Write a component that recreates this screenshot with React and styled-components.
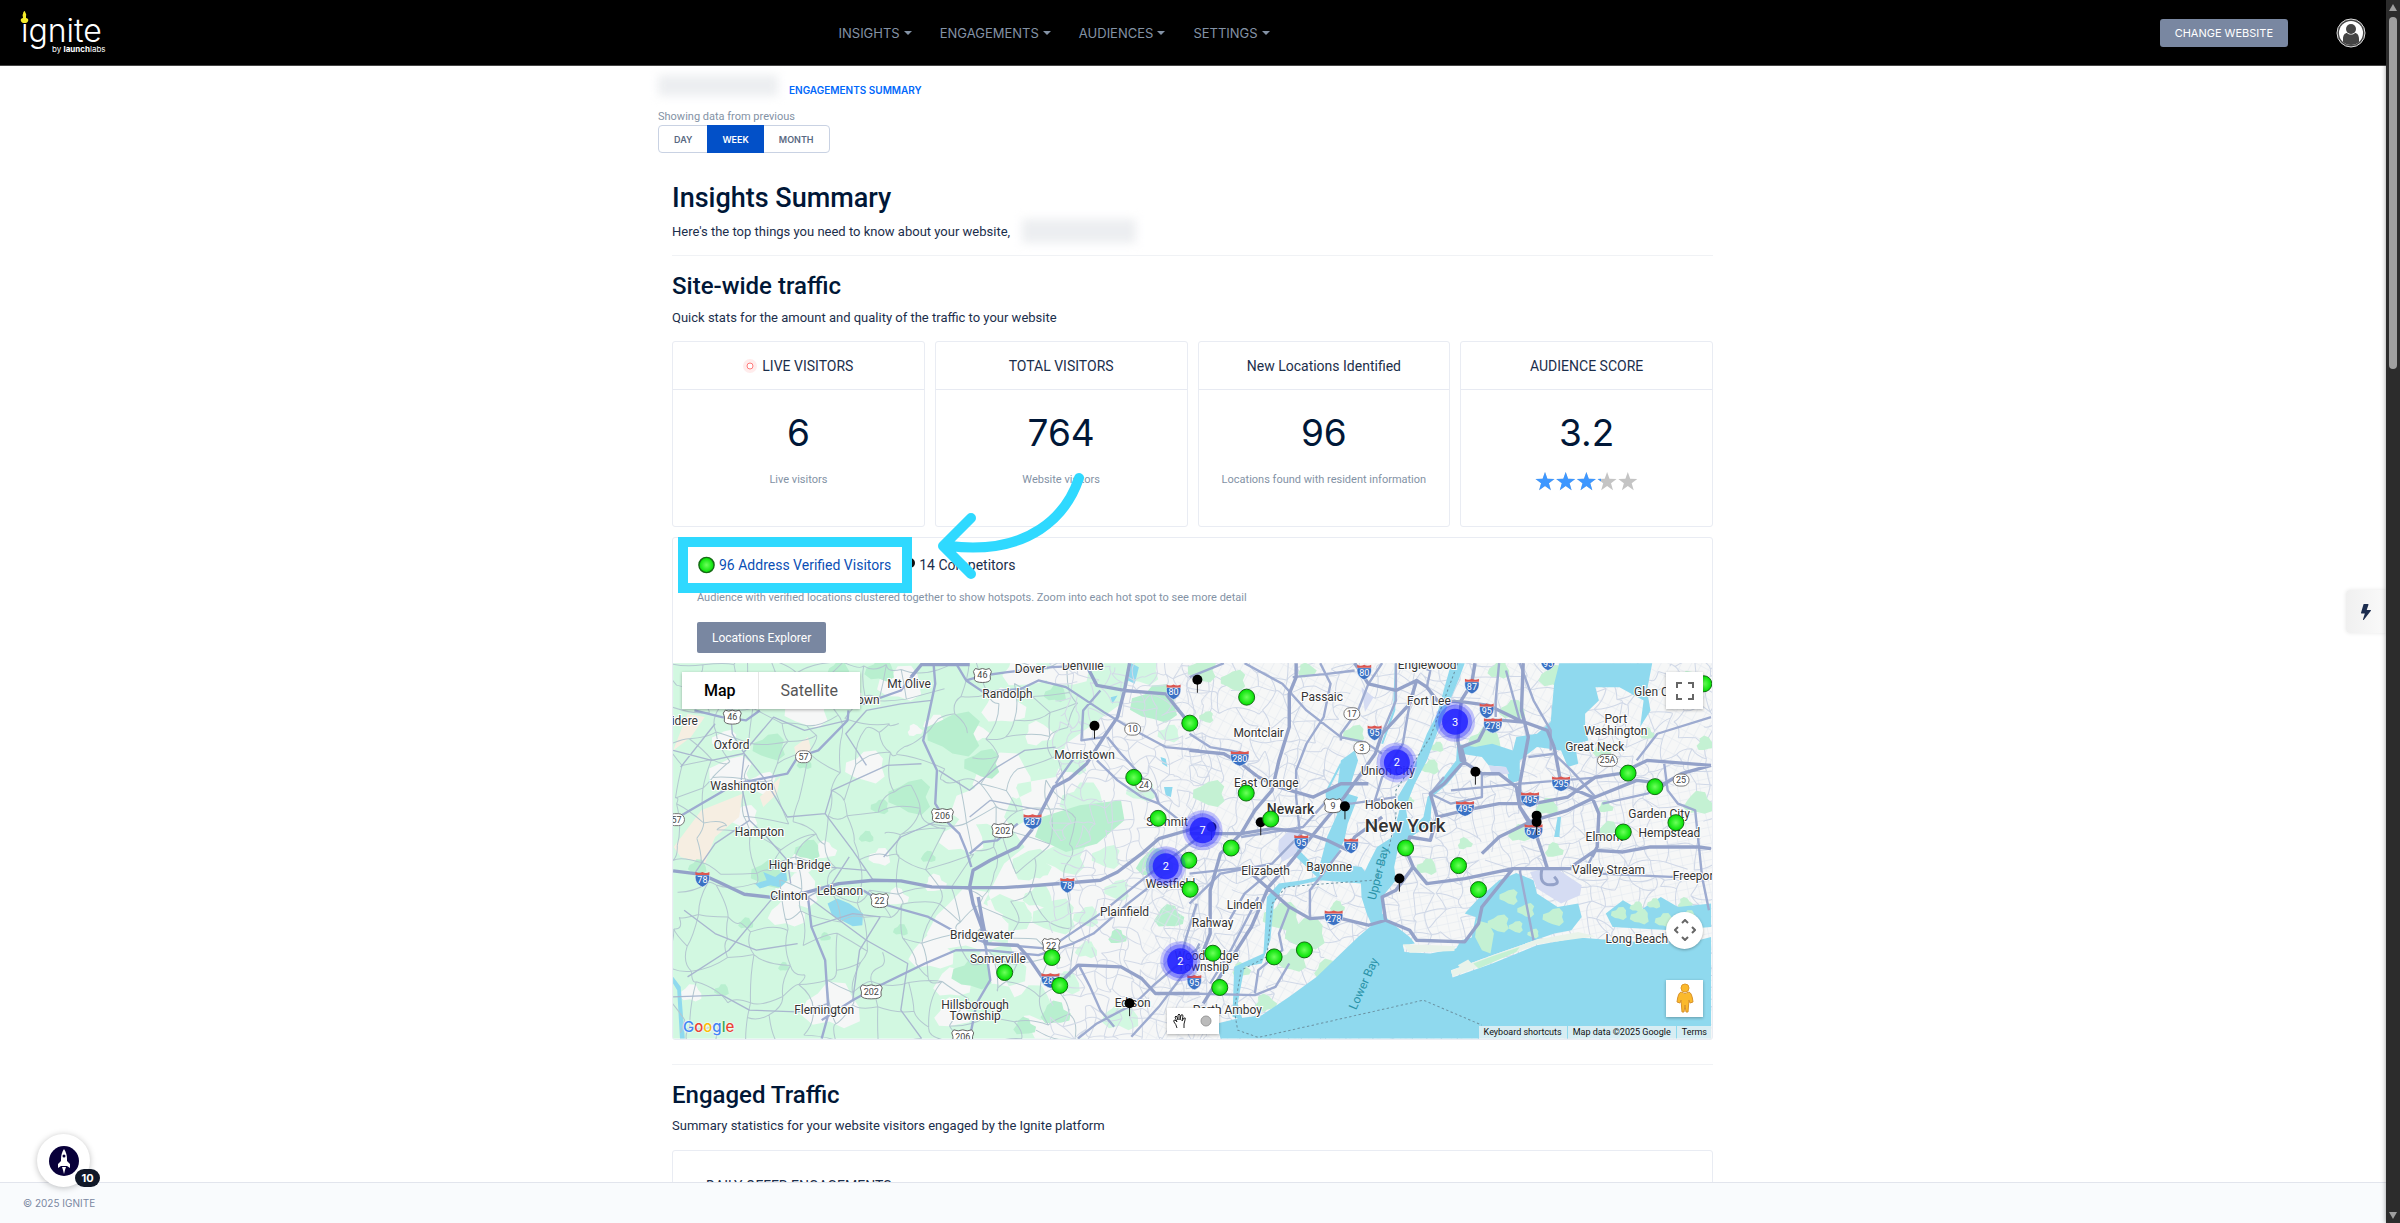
import styled, { createGlobalStyle, css } from "styled-components";
import { BsLightningFill } from "react-icons/bs";

const App = () => {
  return (
    <Page>
      <GlobalStyle />
      <Main>
        <Header>
          <a href="#home" aria-label="ignite by launchlabs">
            <Logo />
          </a>
          <Nav>
            {["INSIGHTS", "ENGAGEMENTS", "AUDIENCES", "SETTINGS"].map((name) => (
              <NavButton key={name}>
                {name}
                <Caret />
              </NavButton>
            ))}
          </Nav>
          <HeaderRight>
            <ChangeButton>CHANGE WEBSITE</ChangeButton>
            <AvatarButton aria-label="Account">
              <Avatar />
            </AvatarButton>
          </HeaderRight>
        </Header>

        <Content>
          <Container>
            <Crumbs>
              <Redacted $width={120} $height={21} />
              <CrumbLink href="#summary">ENGAGEMENTS SUMMARY</CrumbLink>
            </Crumbs>
            <PeriodLabel>Showing data from previous</PeriodLabel>
            <Segmented>
              <Segment>DAY</Segment>
              <Segment $active>WEEK</Segment>
              <Segment>MONTH</Segment>
            </Segmented>

            <Inner>
              <h1>Insights Summary</h1>
              <Lead>
                Here's the top things you need to know about your website,
                <Redacted $width={114} $height={24} />
              </Lead>
              <Divider />
              <h2>Site-wide traffic</h2>
              <Lead>Quick stats for the amount and quality of the traffic to your website</Lead>

              <Stats>
                {stats.map(({ title, value, note, live }) => (
                  <Card key={title}>
                    <CardHead>
                      {live && <LiveDot />}
                      {title}
                    </CardHead>
                    <CardBody>
                      <Value>{value}</Value>
                      {note ? <Note>{note}</Note> : <Stars score={3.2} />}
                    </CardBody>
                  </Card>
                ))}
              </Stats>

              <MapCard>
                <MapIntro>
                  <Legend>
                    <LegendLink href="#verified">
                      <GreenDot />
                      96 Address Verified Visitors
                    </LegendLink>
                    <LegendItem>
                      <PinIcon />
                      14 Competitors
                    </LegendItem>
                  </Legend>
                  <MapNote>
                    Audience with verified locations clustered together to show hotspots. Zoom into
                    each hot spot to see more detail
                  </MapNote>
                  <ExplorerButton>Locations Explorer</ExplorerButton>
                </MapIntro>
                <MapView />
                <Highlight />
                <Arrow />
              </MapCard>

              <Divider $far />
              <h2>Engaged Traffic</h2>
              <Lead>
                Summary statistics for your website visitors engaged by the Ignite platform
              </Lead>
              <EngagedCard>DAILY OFFER ENGAGEMENTS</EngagedCard>
            </Inner>
          </Container>
        </Content>

        <Footer>© 2025 IGNITE</Footer>
        <QuickTab aria-label="Quick actions">
          <BsLightningFill size={16} />
        </QuickTab>
        <Launcher aria-label="Launcher, 10 new">
          <Rocket />
          <Badge>10</Badge>
        </Launcher>
      </Main>
      <ScrollTrack>
        <ScrollArrow />
        <ScrollThumb />
        <ScrollArrow $down />
      </ScrollTrack>
    </Page>
  );
};

export default App;

const stats = [
  { title: "LIVE VISITORS", value: "6", note: "Live visitors", live: true },
  { title: "TOTAL VISITORS", value: "764", note: "Website visitors" },
  { title: "New Locations Identified", value: "96", note: "Locations found with resident information" },
  { title: "AUDIENCE SCORE", value: "3.2" },
];

/* ---------- icons ---------- */

const Logo = () => (
  <svg width="90" height="46" viewBox="0 0 90 46" role="img">
    <path d="M4 13c-3-1-3-5 0-5 0-2-1-3 0-4 0-2 1-3 2-3 0 2 2 3 1 5v2c3 0 3 4 0 5z" fill="#f4ea2a" />
    <g fill="#fff" fontFamily="Inter, sans-serif">
      <text x="2" y="32" fontSize="32" fontWeight="300">
        ıgnite
      </text>
      <text x="33" y="42" fontSize="8">
        by <tspan fontWeight="700">launch</tspan>labs
      </text>
    </g>
  </svg>
);

const Avatar = () => (
  <svg width="30" height="30" viewBox="0 0 30 30">
    <circle cx="15" cy="15" r="14" fill="#444" stroke="#ddd" strokeWidth="1" />
    <circle cx="15" cy="15" r="12" fill="#fff" />
    <circle cx="15" cy="11" r="5" fill="#444" />
    <path d="M7 24v-3c0-4 2-6 4-6 2 2 6 2 8 0 2 0 4 2 4 6v3c-4 4-12 4-16 0z" fill="#444" />
  </svg>
);

const LiveDot = () => (
  <svg width="14" height="14" viewBox="0 0 14 14">
    <circle cx="7" cy="7" r="7" fill="#ffecec" />
    <circle cx="7" cy="7" r="3" fill="#fff" stroke="#ff7a7a" />
  </svg>
);

const GreenDot = () => (
  <svg width="19" height="20" viewBox="-10 -10 20 20">
    <defs>
      <radialGradient id="green">
        <stop offset="0" stopColor="#6dff5c" />
        <stop offset="1" stopColor="#00e000" />
      </radialGradient>
    </defs>
    <circle r="8" fill="url(#green)" stroke="#156b15" strokeWidth="1.5" />
  </svg>
);

const PinIcon = () => (
  <svg width="10" height="20" viewBox="0 0 10 20">
    <path d="M4 8v10" stroke="#333" />
    <circle cx="4" cy="8" r="5" fill="#111" />
  </svg>
);

const STAR = "M10 0l2.4 6.7 7.1.2-5.6 4.4 2 6.9L10 14.1l-5.900 4.100 2-6.900L.5 6.900l7.100-.2z";

const Stars = ({ score }) => (
  <svg width="103" height="24" viewBox="0 -2 103 24" role="img" aria-label={`${score} of 5 stars`}>
    <defs>
      <clipPath id="score">
        <rect y="-2" width={(score / 5) * 103} height="24" />
      </clipPath>
    </defs>
    {["#c4c4c4", "#3d97ff"].map((fill, layer) => (
      <g key={fill} fill={fill} clipPath={layer ? "url(#score)" : undefined}>
        {[0, 1, 2, 3, 4].map((n) => (
          <path key={n} d={STAR} transform={`translate(${n * 20.7} 0)`} />
        ))}
      </g>
    ))}
  </svg>
);

const Rocket = () => (
  <svg width="30" height="30" viewBox="0 0 30 30">
    <circle cx="15" cy="15" r="15" fill="#08003a" />
    <path
      d="M15 3c-2 3-3 6-3 10v2l-3 3v4l3-2h6l3 2v-4l-3-3v-2c0-4-1-7-3-10z"
      fill="#fff"
    />
    <circle cx="15" cy="10" r="1.5" fill="#08003a" />
    <path d="M13 21h4l-1 3-1 4-1-4z" fill="#fff" />
  </svg>
);

/* ---------- map ---------- */

// The map is drawn as two tiles, each on its own grid.
const TILES = { w: -13, e: 517 };
const place = (tile, x, y) => [TILES[tile] + x / 2.904, y / 3 - 12.5];
const tileTransform = (tile) => `translate(${TILES[tile]} -12.5) scale(0.34435 0.33333)`;

const westRoads = [
  "M38 662L120 672L170 695L245 732L330 742L420 728L520 700L620 690L700 692L790 710L880 712L1000 712L1100 705L1280 690L1330 665L1400 610L1450 565L1568 530",
  "M1365 38L1350 120L1330 200L1290 260L1240 340L1190 385L1145 410L1110 480L1080 540L1040 590L960 630L910 660L900 710L910 760L935 830L945 880L1040 885L1070 920L1110 980L1160 1000L1215 945L1340 950L1400 985L1440 1030L1568 1030",
  "M925 740L935 800L950 880",
  "M730 80L760 42L900 42M1240 45L1270 105L1350 120L1470 130L1500 170L1540 220",
];
const westStreets = [
  "M795 38L800 100L765 270L805 360L800 460L830 510L870 550L890 600L905 650M945 880L960 990L920 1060L900 1165",
  "M860 38L890 90L940 75L1010 65L1140 50L1240 45M100 180L180 200L250 210L290 180M590 160L700 120L730 80",
  "M38 510L120 460L220 400L370 370L400 320L460 300L545 210L548 180",
  "M890 90L940 125L1050 115L1100 90L1180 110L1290 185L1370 235L1470 290L1568 300",
  "M1300 260L1340 310L1380 355L1440 430L1450 460L1510 510M1270 330L1330 390L1400 440L1450 460M1205 320L1150 400",
  "M590 720L660 765L780 800L850 840L940 875M945 880L1130 895L1180 860L1280 790L1400 690L1450 650L1568 560",
  "M470 1110L560 1050L640 1005L770 940L860 900L950 900L1100 915L1200 880L1260 850L1360 760L1460 680",
  "M900 610L940 575L980 570L1040 520",
  "M430 740L440 830L480 930L490 1090L470 1165",
  "M1370 1160L1450 1070L1530 960L1568 880M1215 1165L1270 1120L1380 1060L1440 1000L1568 890M1220 950L1250 1010L1280 1080L1320 1130",
  "M1280 120L1230 180L1225 270L1290 260M1560 760L1530 860L1520 900",
];
const westLanes = [
  "M205 180L210 250L245 310L235 400L260 510L310 560L370 630L380 700",
  "M38 300L150 330L240 310L330 200L420 240L545 210",
  "M245 310L300 380L370 500L480 490L500 420L660 345L760 340",
  "M480 490L560 600L620 690M380 640L480 650L600 660",
  "M600 345L540 250L600 180L700 160L790 150",
  "M810 360L900 420L980 350L1060 300L1150 290",
  "M38 1040L180 1035L260 1080L400 1085L490 1060M330 740L200 900L80 980",
  "M430 740L600 870L720 940L700 1080L760 1165M440 830L560 790L640 800",
  "M900 500L960 450L1110 480M830 500L700 560L650 620",
  "M640 800L580 900L560 1050M260 510L160 580L100 670M160 220L60 350",
  "M550 620L500 700L430 740M70 780L160 850L280 900L400 880",
];

const eastRoads = [
  "M310 38L310 80L290 130L290 230L260 330L240 420L190 480L150 550L90 610L60 720L60 850L30 930",
  "M660 90L640 160L560 250L540 310L450 440L370 540L290 640L230 710L180 830L100 960L40 1060",
  "M480 38L520 100L600 120L660 90L690 110L720 150L800 155L870 165L960 210L1040 240L1060 290",
  "M180 670L290 770L350 805L420 800L520 825L570 810L640 840L660 870L800 875L840 820L850 770L940 655L1110 655",
  "M570 810L560 740L600 720L650 650L630 600L640 560L700 570L720 500L700 430L740 400L800 330L790 290L840 270L870 210L910 210L970 215",
  "M830 38L820 100L790 150L780 270L790 330L850 370L900 370L950 410L960 470L1000 530L1030 620L1040 655",
  "M720 500L800 480L900 460L1000 460L1100 440L1180 380L1250 370L1330 330L1516 345",
  "M970 38L965 180L985 260L960 400L960 470L1010 560M1060 290L1080 400L1170 440L1190 490L1185 590L1170 620",
  "M850 610L900 560L1000 510L1100 480L1180 440L1300 390L1380 400L1430 370L1516 345",
  "M650 650L690 700L800 685L940 655M1110 650L1180 600L1260 605L1340 590L1480 590L1516 595",
  "M0 550L150 550L240 535L330 545L400 570L460 600L480 560L560 500",
  "M0 300L100 310L150 340L200 380L260 410L360 440L440 400L520 400",
];
const eastStreets = [
  "M0 80L100 38M0 250L60 290L170 310M160 38L270 100L340 180L440 260L510 275L560 310",
  "M380 38L410 100L390 200L340 280L310 360L310 440L320 540M560 38L520 100L490 180L440 250L440 270",
  "M150 560L330 530L400 450L470 460L600 440M300 80L400 70L480 60",
  "M350 800L350 720L380 680L440 600M290 770L260 850L270 900L200 960L190 1030M0 1030L190 1035L250 1010L290 940",
  "M0 760L90 670L240 640L330 545M0 670L180 650M110 820L160 730L240 660M60 1000L120 900L200 740",
  "M900 38L890 150L890 200M960 210L920 60M640 38L700 60L690 110M740 380L700 430",
  "M700 430L760 460L850 440L850 370M760 420L960 400L1080 390L1200 380",
  "M1380 340L1390 420L1420 460L1470 480L1490 680L1510 780M985 320L1060 310L1110 360L1180 440",
  "M1200 460L1330 430L1390 400M1190 670L1400 680L1516 675M1300 330L1360 250L1516 200",
  "M600 38L600 150L560 250M640 160L620 280L560 380L530 480M960 660L1000 870",
  "M1170 620L1150 660M960 38L1000 150L1050 240L1050 300",
];

const localNet = (seed, x0, x1, step) => {
  let s = seed;
  const rand = () => (s = (s * 16807) % 2147483647) / 2147483647;
  const cols = Math.ceil((x1 - x0) / step) + 1;
  const rows = Math.ceil(1130 / step) + 1;
  const nodes = Array.from({ length: rows }, (_, r) =>
    Array.from({ length: cols }, (_, c) => [
      Math.round(x0 + c * step + (rand() - 0.5) * step),
      Math.round(38 + r * step + (rand() - 0.5) * step),
    ])
  );
  let d = "";
  for (let r = 0; r < rows; r++) {
    for (let c = 0; c < cols; c++) {
      const [x, y] = nodes[r][c];
      [nodes[r][c + 1], nodes[r + 1]?.[c]].forEach((next) => {
        if (!next || rand() < 0.25) return;
        const mx = (x + next[0]) / 2 + (rand() - 0.5) * step * 0.6;
        const my = (y + next[1]) / 2 + (rand() - 0.5) * step * 0.6;
        d += `M${x} ${y}Q${mx.toFixed()} ${my.toFixed()} ${next[0]} ${next[1]}`;
      });
    }
  }
  return d;
};

// irregular blob around a point, for woods and clearings
const blob = (x, y, r, seed) => {
  let d = "";
  for (let i = 0; i < 11; i++) {
    const k = 0.55 + 0.45 * Math.abs(Math.sin(seed * 3.1 + i * 2.3));
    const a = (i / 11) * Math.PI * 2;
    d += `${i ? "L" : "M"}${(x + Math.cos(a) * r * k * 1.2).toFixed()} ${(y + Math.sin(a) * r * k).toFixed()}`;
  }
  return d + "Z";
};
const blobs = (list) => list.map(([x, y, r], i) => blob(x, y, r, i + 1)).join("");

const clearings = blobs([
  [210, 370, 60], [190, 270, 35], [300, 400, 40], [245, 500, 40], [430, 180, 60], [600, 350, 55], [400, 720, 60],
  [400, 640, 40], [640, 620, 30], [700, 100, 60], [800, 220, 30], [960, 460, 100], [880, 560, 60], [1000, 380, 80],
  [500, 1070, 80], [90, 1030, 30], [370, 790, 50], [900, 820, 110], [790, 910, 60], [980, 950, 80], [850, 1000, 50],
  [1000, 170, 60], [1180, 60, 60], [1060, 60, 60], [690, 740, 30], [800, 700, 30], [850, 1090, 50], [480, 600, 30],
  [540, 130, 40], [1000, 800, 70], [1080, 650, 50], [740, 240, 20], [930, 250, 25], [1100, 250, 40],
]);
const suburbs =
  "M1568 38L1380 38L1340 160L1260 220L1180 280L1150 380L1040 400L1000 500L1060 590L1000 640L940 760L1010 800L940 880L1010 1000L1090 1165L1568 1165Z";
const woods = blobs([
  [860, 250, 75], [730, 440, 60], [940, 340, 50], [320, 670, 50], [320, 290, 45], [640, 470, 25], [1440, 160, 65],
  [910, 970, 55], [430, 600, 35], [180, 1020, 20], [1150, 130, 30], [640, 60, 40], [110, 650, 25], [700, 840, 20],
  [520, 60, 30], [420, 340, 20], [600, 560, 20], [250, 820, 20], [1440, 640, 50], [780, 620, 20], [360, 950, 15],
  [1480, 800, 40], [1150, 1090, 40], [1060, 1130, 30], [1330, 860, 25], [480, 860, 15],
]);
const lawns = blobs([
  [1180, 620, 60], [1080, 640, 50], [1300, 620, 40], [1330, 720, 35], [1150, 800, 60], [1240, 800, 35], [1400, 60, 50],
  [1480, 250, 30], [1400, 420, 40], [1200, 340, 40], [1230, 450, 60], [1100, 740, 40], [1080, 1060, 60],
  [1180, 1000, 40], [1340, 1100, 50], [1240, 900, 30], [1040, 790, 40],
]);
const parks = blobs([
  [40, 60, 40], [130, 90, 35], [60, 430, 45], [50, 200, 20], [480, 250, 30], [270, 800, 50], [340, 850, 55],
  [300, 930, 40], [700, 350, 25], [720, 290, 18], [690, 650, 28], [860, 270, 45], [940, 180, 35], [900, 60, 30],
  [1060, 80, 40], [1040, 470, 30], [960, 550, 30], [1220, 540, 30], [1480, 460, 40], [1450, 100, 40], [1200, 300, 25],
  [1330, 250, 20], [430, 770, 20], [400, 960, 35], [1210, 470, 20], [1060, 600, 25], [640, 450, 12], [1500, 280, 25],
  [1440, 760, 20], [150, 960, 25], [220, 1060, 30], [800, 580, 20], [340, 60, 25],
]);
const marsh = blobs([
  [930, 740, 26], [980, 780, 24], [900, 820, 30], [950, 830, 20], [1060, 800, 30], [1000, 850, 16], [1250, 790, 22],
  [1310, 800, 26], [1380, 810, 24], [1300, 770, 18], [1450, 800, 22], [1350, 760, 18],
]);

const water = [
  // lower bay and ocean
  "M90 1165L80 1120L140 1105L210 1095L290 1040L370 980L440 910L490 860L530 825L515 790L500 740L498 690L520 640L545 590L590 560L625 560L605 600L595 650L600 690L560 740L560 790L590 820L640 860L655 880L620 885L625 905L700 910L775 895L790 870L820 862L832 800L800 790L840 745L900 690L950 668L1000 690L1010 730L1070 770L1130 760L1140 800L1110 840L1060 850L1010 868L880 915L760 960L765 982L880 940L1010 885L1130 862L1300 875L1480 870L1516 860L1516 1165Z",
  // hudson and east river
  "M590 560L610 480L605 440L645 370L690 250L720 190L755 60L765 38L800 38L785 80L735 205L690 330L655 400L628 470L640 540L680 500L692 440L735 385L775 330L778 280L800 300L790 350L750 400L705 440L700 520L630 570Z",
  // sound
  "M775 280L830 290L880 280L940 300L950 260L1010 250L1050 215L1060 100L1075 38L1345 38L1330 120L1340 180L1310 230L1320 150L1250 110L1180 110L1190 150L1150 190L1150 240L1160 270L1120 280L1130 340L1100 350L1080 300L1010 290L960 330L960 390L930 400L920 350L870 345L850 320L790 310Z",
  // newark bay, kills and hackensack
  "M375 660L400 560L430 490L400 470L395 425L430 410L440 330L480 300L490 330L460 430L490 440L460 520L450 570L415 640L500 650L530 690L500 700L380 690L270 715L245 760L235 870L210 940L160 950L140 1060L155 1110L125 1100L130 950L215 910L225 740L260 700L330 690L370 680L290 600L310 590Z",
  "M1210 790L1260 750L1310 780L1370 740L1420 770L1516 760L1516 830L1400 840L1230 830Z",
  "M1060 560L1070 500L1080 500L1075 560Z",
];

const labels = [
  ["w", 208, 281, "Oxford"], ["w", 238, 405, "Washington"], ["w", 289, 542, "Hampton"], ["w", 406, 643, "High Bridge"],
  ["w", 375, 735, "Clinton"], ["w", 523, 720, "Lebanon"], ["w", 477, 1078, "Flemington"], ["w", 724, 98, "Mt Olive"],
  ["w", 1010, 128, "Randolph"], ["w", 1076, 53, "Dover"], ["w", 1229, 44, "Denville"], ["w", 1234, 312, "Morristown"],
  ["w", 1474, 513, "Summit"], ["w", 1484, 698, "Westfield"], ["w", 1350, 783, "Plainfield"], ["w", 936, 851, "Bridgewater"],
  ["w", 982, 923, "Somerville"], ["w", 916, 1064, "Hillsborough"], ["w", 916, 1097, "Township"], ["w", 1374, 1056, "Edison"],
  ["w", 72, 211, "idere"], ["w", 600, 146, "town"],
  ["e", 385, 138, "Passaic"], ["e", 201, 245, "Montclair"], ["e", 223, 397, "East Orange"], ["e", 294, 476, "Newark", 14, 500],
  ["e", 627, 532, "New York", 19, 500], ["e", 580, 463, "Hoboken"], ["e", 577, 361, "Union City"], ["e", 696, 150, "Fort Lee"],
  ["e", 691, 42, "Englewood"], ["e", 221, 661, "Elizabeth"], ["e", 406, 648, "Bayonne"], ["e", 160, 761, "Linden"],
  ["e", 67, 817, "Rahway"], ["e", 50, 915, "Woodbridge"], ["e", 40, 949, "Township"], ["e", 110, 1079, "Perth Amboy"],
  ["e", 1370, 123, "Glen Cove"], ["e", 1239, 205, "Port"], ["e", 1239, 239, "Washington"], ["e", 1178, 289, "Great Neck"],
  ["e", 1365, 489, "Garden City"], ["e", 1395, 546, "Hempstead"], ["e", 1206, 559, "Elmont"], ["e", 1218, 658, "Valley Stream"],
  ["e", 1470, 676, "Freeport"], ["e", 1300, 864, "Long Beach"],
];

const shields = [
  ["w", 937, 75, "us", "46"], ["w", 210, 200, "us", "46"], ["w", 417, 319, "st", "57"], ["w", 48, 508, "st", "57"],
  ["w", 821, 496, "us", "206"], ["w", 996, 541, "us", "202"], ["w", 1083, 513, "i", "287"], ["w", 1374, 236, "st", "10"],
  ["w", 1406, 404, "st", "24"], ["w", 1493, 123, "i", "80"], ["w", 123, 686, "i", "78"], ["w", 1184, 704, "i", "78"],
  ["w", 638, 751, "us", "22"], ["w", 1137, 886, "us", "22"], ["w", 614, 1025, "us", "202"], ["w", 1135, 990, "i", "287"],
  ["w", 880, 1160, "us", "206"],
  ["e", 508, 64, "i", "80"], ["e", 472, 190, "st", "17"], ["e", 538, 246, "i", "95"], ["e", 501, 292, "st", "3"],
  ["e", 146, 323, "i", "280"], ["e", 417, 466, "us", "9"], ["e", 325, 575, "i", "95"], ["e", 470, 586, "i", "78"],
  ["e", 419, 802, "i", "278"], ["e", 821, 106, "i", "87"], ["e", 864, 180, "i", "95"], ["e", 882, 224, "i", "278"],
  ["e", 801, 474, "i", "495"], ["e", 990, 447, "i", "495"], ["e", 1080, 399, "i", "295"], ["e", 1000, 543, "i", "678"],
  ["e", 1215, 330, "st", "25A"], ["e", 1429, 389, "st", "25"], ["e", 14, 995, "i", "95"], ["e", 1042, 36, "i", "95"],
];

const visitors = [
  ["w", 1540, 218], ["w", 1377, 381], ["w", 1448, 504], ["w", 1537, 630], ["w", 1541, 717], ["w", 1139, 922],
  ["w", 1002, 967], ["w", 1162, 1006], ["e", 166, 140], ["e", 165, 428], ["e", 236, 506], ["e", 121, 593],
  ["e", 628, 593], ["e", 782, 646], ["e", 840, 718], ["e", 1275, 368], ["e", 1353, 409], ["e", 1414, 517],
  ["e", 1261, 545], ["e", 1495, 100], ["e", 334, 899], ["e", 246, 920], ["e", 68, 909], ["e", 88, 1012],
];
const competitors = [
  ["w", 1263, 226], ["w", 1365, 1059], ["e", 23, 88], ["e", 831, 364], ["e", 452, 468], ["e", 207, 516],
  ["e", 64, 530], ["e", 1009, 496], ["e", 1009, 515], ["e", 610, 685],
];
const clusters = [
  ["w", 1470, 648, 2], ["w", 1512, 933, 2], ["e", 38, 540, 7], ["e", 603, 336, 2], ["e", 772, 214, 3],
];

const at = (tile, x, y) => {
  const [px, py] = place(tile, x, y);
  return `translate(${px.toFixed(1)} ${py.toFixed(1)})`;
};

const Shield = ({ kind, text }) => {
  const w = text.length > 2 ? 9 : 7;
  if (kind === "i")
    return (
      <g>
        <path
          d={`M${-w} -4H${w}C${w + 1} 2 ${w - 2} 6 0 8C${2 - w} 6 ${-w - 1} 2 ${-w} -4Z`}
          fill="#3a71c4"
          stroke="#fff"
          strokeWidth="0.5"
        />
        <path d={`M${-w} -4V-7Q${-w / 2} -5 0 -7Q${w / 2} -5 ${w} -7V-4Z`} fill="#dc5650" />
        <ShieldText y="4" fill="#fff">
          {text}
        </ShieldText>
      </g>
    );
  return (
    <g>
      {kind === "us" ? (
        <path
          d={`M${-w} -7Q${-w / 2} -5 0 -7Q${w / 2} -5 ${w} -7L${w + 2} -4Q${w} 0 ${w + 1} 4Q${w} 7 0 7Q${-w} 7 ${-w - 1} 4Q${-w} 0 ${-w - 2} -4Z`}
          fill="#fff"
          stroke="#666"
        />
      ) : (
        <rect x={-w - 1} y="-6" width={w * 2 + 2} height="12" rx="6" fill="#fff" stroke="#777" />
      )}
      <ShieldText y="3" fill="#444">
        {text}
      </ShieldText>
    </g>
  );
};

const Tile = ({ tile, roads, streets, lanes }) => (
  <g transform={tileTransform(tile)} fill="none" strokeLinejoin="round">
    {lanes && <path d={lanes.join("")} stroke="#a9b7cf" strokeWidth="4" />}
    <path d={streets.join("")} stroke="#9dabd0" strokeWidth="7" />
    <path d={roads.join("")} stroke="#94a2c9" strokeWidth="10" />
  </g>
);

const MapView = () => (
  <MapFrame>
    <MapSvg viewBox="0 0 1040 376">
      <defs>
        <pattern id="blocks" width="9" height="13" patternUnits="userSpaceOnUse" patternTransform="rotate(28)">
          <path d="M0 0H9M0 0V13" stroke="#e2e7ef" fill="none" />
        </pattern>
        <pattern id="blocksB" width="11" height="8" patternUnits="userSpaceOnUse" patternTransform="rotate(-12)">
          <path d="M0 0H11M0 0V8" stroke="#e2e7ef" fill="none" />
        </pattern>
      </defs>
      <rect width="1040" height="376" fill="#f6f7f7" />

      <g transform={tileTransform("w")}>
        <path d="M38 38H1440L1300 330L1420 440L1100 700L1080 900L1240 1165H38Z" fill="#d2f8e1" />
        <path d={suburbs + clearings} fill="#f6f7f7" />
        <path
          d="M38 300L80 190L130 200L90 260ZM40 590L120 480L240 430L230 500L160 560L130 640L60 620ZM390 290L430 260L440 300L400 340ZM290 440L350 380L340 430L300 470Z"
          fill="#f6eee2"
        />
        <path d={lawns} fill="#d2f8e1" />
        <path d={woods} fill="#b8efcf" />
        <path d="M1090 560L1110 500L1220 465L1340 450L1350 510L1270 580L1180 605Z" fill="#b8efcf" />
        <path
          d="M275 700L310 690L300 665L335 680L365 655L370 690L350 712L320 705L290 715ZM487 760L515 745L550 760L590 790L588 825L560 828L500 795ZM1360 90L1370 38L1392 50L1380 100ZM1455 320l15 5 5 25-15-10ZM1465 410l25 0-5 30-15-5ZM1310 140l20-5-15 25ZM38 980L60 1010L72 1165L58 1165L50 1020L38 1000Z"
          fill="#8fd9ee"
        />
        <path d={localNet(71, 38, 1150, 76)} fill="none" stroke="#b4c8d0" strokeWidth="3" />
        <path d={localNet(19, 1150, 1560, 36)} fill="none" stroke="#d3dae7" strokeWidth="3" />
      </g>

      <path d="M505 0H1040V376H470V200L505 150Z" fill="url(#blocks)" />
      <path d="M760 110H1040V290H700V160Z" fill="#f6f7f7" />
      <path d="M760 110H1040V290H700V160Z" fill="url(#blocksB)" />

      <g transform={tileTransform("e")}>
        <path d={localNet(43, 0, 1540, 46)} fill="none" stroke="#d0d8e7" strokeWidth="3" />
        <path d={parks} fill="#c4f1d3" />
        <path d={water.join("")} fill="#8fd9ee" />
        <path d={marsh} fill="#c4f1d3" />
        <path
          d="M620 882L700 884L772 888L770 902L640 908ZM780 945L810 928L820 940L790 955ZM760 962L880 915L1010 868L1130 845L1180 858L1010 882L880 935L765 980Z"
          fill="#e9f3ea"
        />
        <path d="M830 860L835 810L870 820L885 850L875 910L850 900ZM825 940L880 918L960 890L950 905L840 955Z" fill="#c4f1d3" />
        <path
          d="M260 570L290 540L330 545L310 610L270 635L258 600ZM990 665L1060 650L1140 705L1135 735L1080 760L1010 715ZM870 345L920 350L930 370L880 375ZM500 110L535 140L510 185Z"
          fill="#d5dcf3"
        />
        <path d="M600 38L595 180L560 280M440 340L400 420" fill="none" stroke="#8fd9ee" strokeWidth="6" />
        <path
          d="M780 38L700 260L600 420L600 500L580 590L540 690M530 690L400 700L280 710L240 760L225 920L150 960L130 1080L140 1140L200 1162L680 1050L850 1125"
          fill="none"
          stroke="#6b93a3"
          strokeWidth="3"
          strokeDasharray="7 7"
        />
      </g>

      <Tile tile="w" roads={westRoads} streets={westStreets} lanes={westLanes} />
      <Tile tile="e" roads={eastRoads} streets={eastStreets} />
      <path d="M870 205Q866 222 878 222T882 214" fill="none" stroke="#94a2c9" strokeWidth="3" />

      {shields.map(([tile, x, y, kind, text], i) => (
        <g key={i} transform={at(tile, x, y)}>
          <Shield kind={kind} text={text} />
        </g>
      ))}
      {labels.map(([tile, x, y, text, size, weight], i) => (
        <Town key={i} transform={at(tile, x, y + 14)} $size={size} $weight={weight}>
          {text}
        </Town>
      ))}
      <WaterName transform={at("e", 560, 672) + " rotate(-76)"}>Upper Bay</WaterName>
      <WaterName transform={at("e", 517, 1005) + " rotate(-66)"}>Lower Bay</WaterName>

      {competitors.map(([tile, x, y], i) => (
        <g key={i} transform={at(tile, x, y)}>
          <path d="M0 0V13" stroke="#222" />
          <circle r="5" />
        </g>
      ))}
      {visitors.map(([tile, x, y], i) => (
        <circle key={i} r="8" transform={at(tile, x, y)} fill="url(#green)" stroke="#156b15" />
      ))}
      {clusters.map(([tile, x, y, count], i) => (
        <g key={i} transform={at(tile, x, y)} fill="#2222ff">
          <circle r="20" opacity="0.25" />
          <circle r="17" opacity="0.35" />
          <circle r="13" opacity="0.85" />
          <ClusterText y="4">{count}</ClusterText>
        </g>
      ))}
    </MapSvg>

    <MapTypes>
      <MapType $active>Map</MapType>
      <MapType>Satellite</MapType>
    </MapTypes>
    <FullscreenButton aria-label="Toggle fullscreen">
      <svg width="18" height="18" viewBox="0 0 18 18" fill="none" stroke="#666" strokeWidth="2">
        <path d="M1 6V1h5M12 1h5v5M17 12v5h-5M6 17H1v-5" />
      </svg>
    </FullscreenButton>
    <PanButton aria-label="Map camera controls">
      <svg width="22" height="22" viewBox="0 0 22 22" fill="none" stroke="#666" strokeWidth="2">
        <path d="M8 4l3-3 3 3M8 18l3 3 3-3M4 8l-3 3 3 3M18 8l3 3-3 3" />
      </svg>
    </PanButton>
    <PegmanButton aria-label="Street view">
      <svg width="18" height="30" viewBox="0 0 18 30">
        <path
          d="M5 9Q2 10 1 19l3 1 1-3 1 12h2l1-7 1 7h2l1-12 1 3 3-1Q16 10 13 9Q9 12 5 9Z"
          fill="#fbb92c"
          stroke="#d9922a"
        />
        <circle cx="9" cy="5" r="4" fill="#fbb92c" stroke="#e09a2a" />
      </svg>
    </PegmanButton>
    <DrawTools>
      <button aria-label="Stop drawing">
        <svg width="14" height="16" viewBox="0 0 14 16" fill="#fff" stroke="#222">
          <path d="M4 15Q3 11 1 9Q0 7 2 7L4 9L2 4Q3 2 4 4L5 7V2Q6 0 7 2V7L8 2Q10 1 10 3L9 8L11 5Q13 4 12 7L11 11V15" />
        </svg>
      </button>
      <button aria-label="Add a marker">
        <svg width="12" height="12" viewBox="0 0 12 12">
          <circle cx="6" cy="6" r="5" fill="#bbb" stroke="#999" />
        </svg>
      </button>
    </DrawTools>
    <GoogleMark href="#google">
      <b>G</b>
      <b>o</b>
      <b>o</b>
      <b>g</b>
      <b>l</b>
      <b>e</b>
    </GoogleMark>
    <Credits>
      <button>Keyboard shortcuts</button>
      <span>Map data ©2025 Google</span>
      <a href="#terms">Terms</a>
    </Credits>
  </MapFrame>
);

const Arrow = () => (
  <ArrowSvg width="154" height="120" viewBox="0 0 154 120">
    <path
      d="M144 10C132 46 96 88 14 78M36 50L8 78L36 106"
      fill="none"
      stroke="#2fd9ff"
      strokeWidth="10"
      strokeLinecap="round"
      strokeLinejoin="round"
    />
  </ArrowSvg>
);

/* ---------- styles ---------- */

const GlobalStyle = createGlobalStyle`
  * { box-sizing: border-box; }
  body {
    margin: 0;
    background: #fff;
    color: #1b2e4b;
    font-family: Roboto, sans-serif;
    font-size: 14px;
  }
  h1, h2, p { margin: 0; }
  h1, h2 { color: #001737; font-weight: 500; }
  h1 { font-size: 27px; line-height: 32px; margin-bottom: 7px; }
  h2 { font-size: 24px; line-height: 32px; margin-bottom: 5px; }
  button { border: 0; background: none; padding: 0; font: inherit; color: inherit; cursor: pointer; }
  a { color: inherit; text-decoration: none; }
  svg { display: block; }
`;

const Page = styled.div`
  display: flex;
  height: 100vh;
`;
const Main = styled.div`
  position: relative;
  flex: 1;
  min-width: 0;
  display: flex;
  flex-direction: column;
`;

const Header = styled.header`
  display: grid;
  grid-template-columns: 35% 1fr auto;
  align-items: center;
  flex: none;
  height: 66px;
  padding: 0 20px 0 16px;
  background: #000;
  border-bottom: 1px solid #444;
  > a { padding-left: 3px; }
`;
const Nav = styled.nav`
  display: flex;
  gap: 28px;
`;
const NavButton = styled.button`
  display: flex;
  align-items: center;
  gap: 4px;
  color: #8392a5;
  font-family: Inter, sans-serif;
  font-size: 13px;
`;
const Caret = styled.span`
  border: 4px solid transparent;
  border-top-color: currentColor;
  border-bottom: 0;
`;
const HeaderRight = styled.div`
  display: flex;
  align-items: center;
  gap: 48px;
`;
const ChangeButton = styled.button`
  height: 28px;
  padding: 0 15px;
  border-radius: 3px;
  background: #7987a1;
  color: #fff;
  font-family: Inter, sans-serif;
  font-size: 11px;
`;
const AvatarButton = styled.button`
  border-radius: 50%;
`;

const Content = styled.main`
  flex: 1;
  min-height: 0;
  overflow: hidden;
`;
const Container = styled.div`
  max-width: 1070px;
  margin: 0 auto;
  padding-top: 9px;
`;
const Inner = styled.div`
  padding: 29px 15px 0 14px;
`;
const Crumbs = styled.div`
  display: flex;
  align-items: flex-end;
  gap: 11px;
  line-height: 12px;
`;
const CrumbLink = styled.a`
  color: #0168fa;
  font-family: Inter, sans-serif;
  font-size: 10px;
  font-weight: 600;
`;
const Redacted = styled.span`
  width: ${({ $width }) => $width}px;
  height: ${({ $height }) => $height}px;
  background: #eceef1;
  filter: blur(5px);
`;
const PeriodLabel = styled.p`
  margin-top: 13px;
  color: #8392a5;
  font-size: 11px;
  line-height: 16px;
`;
const Segmented = styled.div`
  display: inline-flex;
  height: 28px;
  border: 1px solid #c9d2e3;
  border-radius: 4px;
`;
const Segment = styled.button`
  padding: 0 15px;
  color: #596882;
  font-family: Inter, sans-serif;
  font-size: 9px;
  font-weight: 600;
  ${({ $active }) =>
    $active &&
    css`
      margin: -1px 0;
      background: #0250c8;
      color: #fff;
    `}
`;

const Lead = styled.p`
  display: flex;
  align-items: center;
  gap: 12px;
  height: 20px;
  font-size: 13px;
`;
const Divider = styled.hr`
  margin: ${({ $far }) => ($far ? 24 : 14)}px 0 14px;
  border: 0;
  border-top: 1px solid #f0f2f5;
`;

const frame = css`
  border: 1px solid #e9ecf3;
  border-radius: 3px;
`;
const Stats = styled.section`
  display: grid;
  grid-template-columns: repeat(4, 1fr);
  gap: 10px;
  margin: 14px 0 10px;
`;
const Card = styled.article`
  ${frame}
  text-align: center;
`;
const CardHead = styled.div`
  display: flex;
  align-items: center;
  justify-content: center;
  gap: 5px;
  height: 48px;
  border-bottom: 1px solid #e7eaf2;
  font-size: 14px;
`;
const CardBody = styled.div`
  display: flex;
  flex-direction: column;
  align-items: center;
  gap: 13px;
  height: 136px;
  padding-top: 19px;
`;
const Value = styled.div`
  color: #001737;
  font-family: Inter, sans-serif;
  font-size: 37px;
  line-height: 48px;
`;
const Note = styled.p`
  color: #8392a5;
  font-size: 11px;
  line-height: 20px;
`;

const MapCard = styled.section`
  ${frame}
  position: relative;
`;
const MapIntro = styled.div`
  padding: 17px 24px 10px;
`;
const Legend = styled.div`
  display: flex;
  align-items: center;
  gap: 15px;
  font-size: 14px;
`;
const LegendItem = styled.span`
  display: flex;
  align-items: center;
  gap: 3px;
  height: 20px;
`;
const LegendLink = styled(LegendItem).attrs({ as: "a" })`
  color: #0a4fb5;
`;
const MapNote = styled.p`
  margin: 14px 0 15px;
  color: #8392a5;
  font-size: 11px;
  line-height: 18px;
`;
const ExplorerButton = styled.button`
  height: 31px;
  padding: 0 15px;
  border-radius: 2px;
  background: #7987a1;
  color: #fff;
  font-size: 12px;
`;
const Highlight = styled.div`
  position: absolute;
  top: -1px;
  left: 5px;
  width: 234px;
  height: 56px;
  border: 10px solid #2fd9ff;
  pointer-events: none;
`;
const ArrowSvg = styled.svg`
  position: absolute;
  top: -70px;
  left: 262px;
  pointer-events: none;
`;
const EngagedCard = styled.section`
  ${frame}
  margin-top: 14px;
  padding: 27px 33px;
  font-size: 14px;
`;

const MapFrame = styled.div`
  position: relative;
  overflow: hidden;
`;
const MapSvg = styled.svg`
  width: 100%;
  height: auto;
`;
const Town = styled.text`
  fill: #333;
  stroke: #fff;
  stroke-width: 2px;
  paint-order: stroke;
  text-anchor: middle;
  font-size: ${({ $size }) => $size || 12}px;
  font-weight: ${({ $weight }) => $weight || 400};
`;
const WaterName = styled.text`
  fill: #2a93a8;
  text-anchor: middle;
  font-size: 12px;
`;
const ShieldText = styled.text`
  text-anchor: middle;
  font-size: 9px;
`;
const ClusterText = styled.text`
  fill: #fff;
  text-anchor: middle;
  font-size: 11px;
`;
const control = css`
  position: absolute;
  background: #fff;
  box-shadow: 0 1px 3px rgba(0, 0, 0, 0.3);
`;
const MapTypes = styled.div`
  ${control}
  top: 9px;
  left: 9px;
  display: flex;
  height: 37px;
`;
const MapType = styled.button`
  padding: 0 22px;
  color: #565656;
  font-size: 16px;
  ${({ $active }) =>
    $active &&
    css`
      border-right: 1px solid #e6e6e6;
      color: #000;
      font-weight: 500;
    `}
`;
const FullscreenButton = styled.button`
  ${control}
  top: 9px;
  right: 9px;
  display: grid;
  place-items: center;
  width: 37px;
  height: 37px;
`;
const PanButton = styled(FullscreenButton)`
  top: auto;
  bottom: 90px;
  border-radius: 50%;
`;
const PegmanButton = styled(FullscreenButton)`
  top: auto;
  bottom: 22px;
`;
const DrawTools = styled.div`
  ${control}
  bottom: 5px;
  left: 50%;
  display: flex;
  transform: translateX(-50%);
  button {
    display: grid;
    place-items: center;
    width: 26px;
    height: 26px;
  }
`;
const GoogleMark = styled.a`
  position: absolute;
  bottom: 3px;
  left: 10px;
  font-family: Inter, sans-serif;
  font-size: 15px;
  display: flex;
  text-shadow: 0 0 2px #fff, 0 0 2px #fff;
  b { font-weight: 500; color: #4285f4; }
  b:nth-child(2), b:nth-child(6) { color: #ea4335; }
  b:nth-child(3) { color: #fbbc05; }
  b:nth-child(5) { color: #34a853; }
`;
const Credits = styled.div`
  position: absolute;
  right: 0;
  bottom: 0;
  display: flex;
  gap: 1px;
  color: #111;
  font-size: 9px;
  line-height: 13px;
  > * {
    padding: 0 5px;
    background: rgba(245, 245, 245, 0.7);
  }
`;

const Footer = styled.footer`
  flex: none;
  display: flex;
  align-items: center;
  height: 41px;
  padding: 0 23px;
  border-top: 1px solid #e2e5ed;
  background: #f9fbfd;
  color: #7987a1;
  font-family: Inter, sans-serif;
  font-size: 10px;
`;
const QuickTab = styled.button`
  position: absolute;
  top: 590px;
  right: 0;
  display: grid;
  place-items: center;
  width: 40px;
  height: 43px;
  border-radius: 4px 0 0 4px;
  background: linear-gradient(90deg, #f0f0f0, #fafafa);
  box-shadow: 0 0 4px rgba(0, 0, 0, 0.1);
  color: #1c2d4f;
`;
const Launcher = styled.button`
  position: absolute;
  bottom: 36px;
  left: 37px;
  display: grid;
  place-items: center;
  width: 53px;
  height: 53px;
  border-radius: 50%;
  background: #fff;
  box-shadow: 0 1px 6px rgba(0, 0, 0, 0.25);
`;
const Badge = styled.span`
  position: absolute;
  right: -10px;
  bottom: 0;
  width: 25px;
  border-radius: 9px;
  background: #101828;
  color: #fff;
  font-family: Inter, sans-serif;
  font-size: 11px;
  font-weight: 700;
  line-height: 18px;
`;

const ScrollTrack = styled.div`
  position: relative;
  display: flex;
  flex-direction: column;
  align-items: center;
  width: 14px;
  padding: 4px 0;
  background: #2c2c2c;
  box-shadow: 0 0 5px rgba(0, 0, 0, 0.4);
`;
const ScrollArrow = styled.span`
  border: 4px solid transparent;
  border-${({ $down }) => ($down ? "top" : "bottom")}: 7px solid #9f9f9f;
  border-${({ $down }) => ($down ? "bottom" : "top")}: 0;
  ${({ $down }) => $down && "margin-top: auto;"}
`;
const ScrollThumb = styled.span`
  width: 8px;
  height: 29%;
  margin-top: 6px;
  border-radius: 4px;
  background: #9f9f9f;
`;
